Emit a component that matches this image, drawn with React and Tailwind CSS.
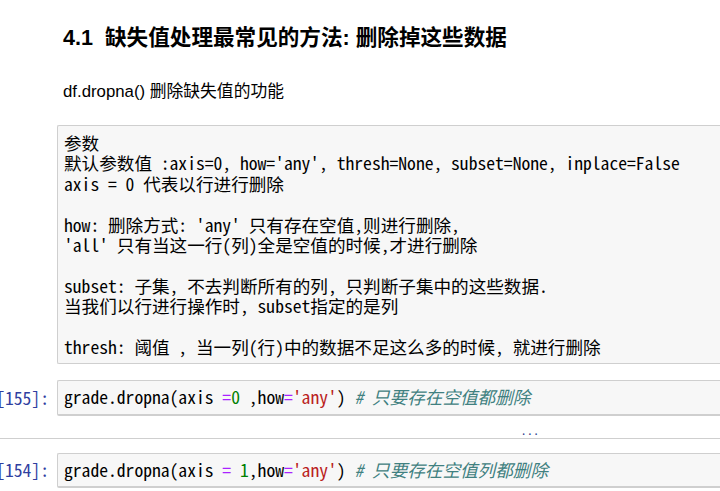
import React from "react";

const mono = "font-['Noto_Sans_Mono_CJK_SC','Liberation_Mono','Noto_Sans_CJK_SC',monospace]";

const notes = [
  "参数",
  "默认参数值 :axis=0, how='any', thresh=None, subset=None, inplace=False",
  "axis = 0 代表以行进行删除",
  "",
  "how: 删除方式: 'any' 只有存在空值,则进行删除,",
  "'all' 只有当这一行(列)全是空值的时候,才进行删除",
  "",
  "subset: 子集, 不去判断所有的列, 只判断子集中的这些数据.",
  "当我们以行进行操作时, subset指定的是列",
  "",
  "thresh: 阈值 , 当一列(行)中的数据不足这么多的时候, 就进行删除",
];

function CodeCell({ n, children }) {
  return (
    <div className="flex">
      <div className={`flex w-[57px] shrink-0 items-center justify-end overflow-hidden pr-[8px] text-[17.6px] leading-[20.4px] text-[#303F9F] ${mono}`}>
        <span className="shrink-0 whitespace-pre">In [{n}]:</span>
      </div>
      <div className={`flex-1 rounded-l-[2px] border border-b-2 border-r-0 border-[#cfcfcf] bg-[#f7f7f7] px-[6px] py-[6px] text-[17.6px] leading-[20.4px] text-black ${mono} whitespace-pre`}>
        {children}
      </div>
    </div>
  );
}

export default function App() {
  return (
    <div className="h-[491px] w-[720px] overflow-hidden bg-white text-black">
      <div className="pl-[63px] font-['Liberation_Sans','Noto_Sans_CJK_SC',sans-serif]">
        <h2 className="mt-[24px] whitespace-pre text-[21.6px] font-bold leading-[28px]">
          4.1  缺失值处理最常见的方法: 删除掉这些数据
        </h2>
        <p className="mt-[29px] text-[16.8px] leading-[22px]">df.dropna() 删除缺失值的功能</p>
      </div>

      <div className="mt-[22px] pl-[57px]">
        <div className={`rounded-l-[2px] border border-r-0 border-[#cfcfcf] bg-[#f7f7f7] pb-[6px] pl-[6px] pt-[7px] text-[17.6px] leading-[20.4px] ${mono}`}>
          {notes.map((line, i) => (
            <div key={i} className="h-[20.4px] whitespace-pre">
              {line}
            </div>
          ))}
        </div>
      </div>

      <div className="mt-[16px]">
        <CodeCell n="155">
          grade.dropna(axis <span className="text-[#AA22FF]">=</span>
          <span className="text-[#008000]">0</span> ,how
          <span className="text-[#AA22FF]">=</span>
          <span className="text-[#BA2121]">'any'</span>){" "}
          <span className="italic text-[#408080]"># 只要存在空值都删除</span>
        </CodeCell>
      </div>

      <div className="flex h-[23px] items-end justify-start border-b border-[#cfcfcf] pb-[1px] pl-[522px]">
        <span className="text-[12px] leading-[12px] tracking-[3px] text-[#2a3a8a]">...</span>
      </div>

      <div className="mt-[14px]">
        <CodeCell n="154">
          grade.dropna(axis <span className="text-[#AA22FF]">=</span>{" "}
          <span className="text-[#008000]">1</span>,how
          <span className="text-[#AA22FF]">=</span>
          <span className="text-[#BA2121]">'any'</span>){" "}
          <span className="italic text-[#408080]"># 只要存在空值列都删除</span>
        </CodeCell>
      </div>
    </div>
  );
}
